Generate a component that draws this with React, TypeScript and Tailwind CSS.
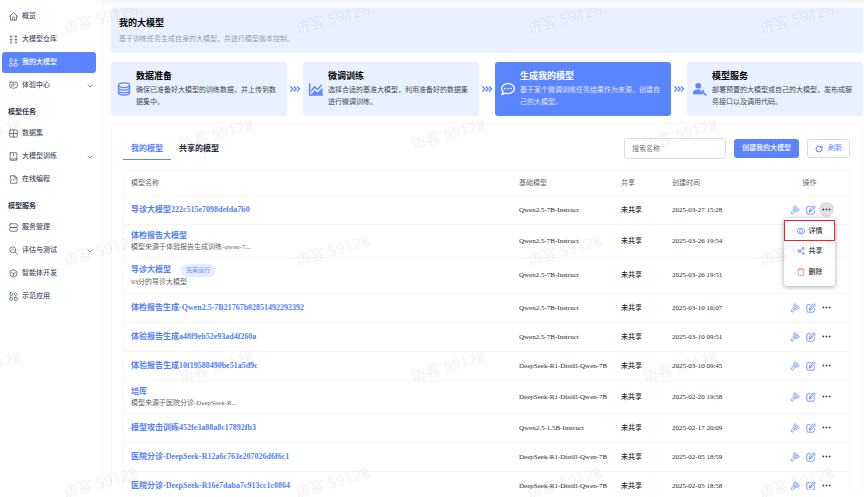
import React from "react";
import { clsx } from "clsx";
import { ChevronDown, RotateCw } from "lucide-react";
import { FaRegCommentDots } from "react-icons/fa";
import { AiOutlineDelete, AiOutlineEye, AiOutlineShareAlt } from "react-icons/ai";

type IconProps = { className?: string };

const LineIcon: React.FC<IconProps & { children: React.ReactNode }> = ({ className, children }) => (
  <svg
    viewBox="0 0 24 24"
    fill="none"
    stroke="currentColor"
    strokeWidth="2"
    strokeLinejoin="round"
    strokeLinecap="round"
    className={clsx("shrink-0", className)}
    aria-hidden="true"
  >
    {children}
  </svg>
);

const HomeIcon = (p: IconProps) => (
  <LineIcon {...p}>
    <path d="M1.5 11.5 12 2l10.5 9.5M4 10v11.500h16V10" />
    <path d="M9 21v-5a3 3 0 0 1 6 0v5" />
  </LineIcon>
);

const RepoIcon = (p: IconProps) => (
  <LineIcon {...p}>
    <path d="M3 3h5M3 12h5M3 21h5M16 3h5M16 12h5M16 21h5M5.500 3v5M5.500 13v5M18.500 3v5M18.500 13v5" />
  </LineIcon>
);

const ModelIcon = (p: IconProps) => (
  <LineIcon {...p}>
    <rect x="2" y="2" width="7" height="7" rx="2" />
    <rect x="2" y="14" width="7" height="8" rx="2" />
    <rect x="14" y="14" width="8" height="8" rx="2" />
    <path d="M18 2v8M14 6h8" />
  </LineIcon>
);

const ChatIcon = (p: IconProps) => (
  <LineIcon {...p}>
    <path d="M5 3h14a3 3 0 0 1 3 3v9a3 3 0 0 1-3 3h-4l-3 3-3-3H5a3 3 0 0 1-3-3V6a3 3 0 0 1 3-3z" />
    <path d="M7 8.500h10M7 13h6" />
  </LineIcon>
);

const GridIcon = (p: IconProps) => (
  <LineIcon {...p}>
    <rect x="2" y="2.500" width="20" height="19" rx="2" />
    <path d="M12 3v18M2 12h20" />
  </LineIcon>
);

const TrainIcon = (p: IconProps) => (
  <LineIcon {...p}>
    <rect x="3" y="2" width="18" height="20" rx="1" />
    <path d="M12 5v5M3 18.500h18" />
  </LineIcon>
);

const CodeFileIcon = (p: IconProps) => (
  <LineIcon {...p}>
    <path d="M4 9V2h11l6 6v3M15 2v6h6M4 17v5h17v-5" />
    <path d="M2 13h6M11 13h3M18 13h4" />
  </LineIcon>
);

const ServerIcon = (p: IconProps) => (
  <LineIcon {...p}>
    <rect x="2" y="2" width="20" height="10" rx="3" />
    <rect x="2" y="12" width="20" height="10" rx="3" />
  </LineIcon>
);

const EvaluateIcon = (p: IconProps) => (
  <LineIcon {...p}>
    <circle cx="10" cy="10" r="8" />
    <path d="m16 16 6 6M7 11l3-3 3 3" />
  </LineIcon>
);

const CubeIcon = (p: IconProps) => (
  <LineIcon {...p}>
    <path d="m12 2 9 5v10l-9 5-9-5V7z" />
    <path d="m7 9.500 5 2.500 5-2.500M12 12v6" />
  </LineIcon>
);

const DemoIcon = (p: IconProps) => (
  <LineIcon {...p}>
    <rect x="2" y="2" width="7" height="7" rx="2" />
    <rect x="2" y="14" width="7" height="8" rx="2" />
    <rect x="14" y="14" width="8" height="8" rx="2" />
    <path d="M18 1.500 22 6l-4 4-4-4z" />
  </LineIcon>
);

const DatabaseIcon = (p: IconProps) => (
  <svg
    viewBox="0 0 24 24"
    fill="none"
    stroke="currentColor"
    strokeWidth="2.200"
    className={p.className}
    aria-hidden="true"
  >
    <ellipse cx="12" cy="5.500" rx="9.500" ry="4" />
    <path d="M2.500 5.500v13c0 2.200 4.200 4 9.500 4s9.500-1.800 9.500-4v-13" />
    <path d="M2.500 10c0 2.200 4.200 4 9.500 4s9.500-1.800 9.500-4M2.500 14.500c0 2.200 4.200 4 9.500 4s9.500-1.800 9.500-4" />
  </svg>
);

const ChartIcon = (p: IconProps) => (
  <svg viewBox="0 0 24 24" fill="currentColor" className={p.className} aria-hidden="true">
    <path d="M0 2h2.500v19H24v2.500H0z" />
    <path d="M4 18.500V13l5.500-6.500 5 4.500L21 4l1.600 1.500-8 9.200-5-4.500L6 14.500z" />
    <path d="m4 21.500 5.700-7.500 5 4.500 8.300-8.500v11.500z" />
  </svg>
);

const UserToolIcon = (p: IconProps) => (
  <svg viewBox="0 0 24 24" fill="currentColor" className={p.className} aria-hidden="true">
    <circle cx="9" cy="6.500" r="4.800" />
    <path d="M0 21v-2.500C0 15 4 13 9 13c1.300 0 2.600.1 3.600.4-.4 2.300.7 4.300 2.900 5.100L18 21z" />
    <path d="M14 13.200a4 4 0 0 1 5.300 4.700l4.400 4.100-2 2-4.300-4.200a4 4 0 0 1-4.500-5.100l2.400 2.200 1.500-1.500z" />
  </svg>
);

const TripleArrow = (p: IconProps) => (
  <svg
    viewBox="0 0 20 12"
    fill="none"
    stroke="currentColor"
    strokeWidth="2.600"
    className={p.className}
    aria-hidden="true"
  >
    <path d="m1 1 5 5-5 5M7.500 1l5 5-5 5M14 1l5 5-5 5" />
  </svg>
);

const DeployIcon = (p: IconProps) => (
  <LineIcon {...p}>
    <path d="m13 2 9 9-3.500 3.500h-6l-3-3v-6z" />
    <path d="M14 7v3h3M9 11.500 2 18.500 5.500 22l7-7" />
  </LineIcon>
);

const EditIcon = (p: IconProps) => (
  <LineIcon {...p}>
    <path d="M10 4H5a3 3 0 0 0-3 3v12a3 3 0 0 0 3 3h12a3 3 0 0 0 3-3v-5" />
    <path d="m8 16 1-5L18.500 1.500l4 4L13 15zM15.500 4.500l4 4M8 16l6-6" />
  </LineIcon>
);

const DotsIcon = (p: IconProps) => (
  <svg viewBox="0 0 24 24" fill="currentColor" className={p.className} aria-hidden="true">
    <circle cx="3.500" cy="12" r="2.500" />
    <circle cx="12" cy="12" r="2.500" />
    <circle cx="20.500" cy="12" r="2.500" />
  </svg>
);

type NavEntry = {
  name: string;
  icon: React.FC<IconProps>;
  active?: boolean;
  expandable?: boolean;
};

const navGroups: { title?: string; items: NavEntry[] }[] = [
  {
    items: [
      { name: "概览", icon: HomeIcon },
      { name: "大模型仓库", icon: RepoIcon },
      { name: "我的大模型", icon: ModelIcon, active: true },
      { name: "体验中心", icon: ChatIcon, expandable: true },
    ],
  },
  {
    title: "模型任务",
    items: [
      { name: "数据集", icon: GridIcon },
      { name: "大模型训练", icon: TrainIcon, expandable: true },
      { name: "在线编程", icon: CodeFileIcon },
    ],
  },
  {
    title: "模型服务",
    items: [
      { name: "服务管理", icon: ServerIcon },
      { name: "评估与测试", icon: EvaluateIcon, expandable: true },
      { name: "智能体开发", icon: CubeIcon },
      { name: "示范应用", icon: DemoIcon },
    ],
  },
];

const steps = [
  {
    title: "数据准备",
    text: "确保已准备好大模型的训练数据，并上传到数据集中。",
    icon: DatabaseIcon,
  },
  {
    title: "微调训练",
    text: "选择合适的基准大模型，利用准备好的数据集进行微调训练。",
    icon: ChartIcon,
  },
  {
    title: "生成我的模型",
    text: "基于某个微调训练任务结果作为来源，创建自己的大模型。",
    icon: FaRegCommentDots,
    active: true,
  },
  {
    title: "模型服务",
    text: "部署预置的大模型或自己的大模型，发布成服务接口以及调用代码。",
    icon: UserToolIcon,
  },
];

type Model = {
  name: string;
  note?: string;
  tag?: string;
  base: string;
  created: string;
};

const models: Model[] = [
  { name: "导诊大模型222c515e7098defda7b0", base: "Qwen2.5-7B-Instruct", created: "2025-03-27 15:28" },
  {
    name: "体检报告大模型",
    note: "模型来源于体验报告生成训练-qwen-7...",
    base: "Qwen2.5-7B-Instruct",
    created: "2025-03-26 19:54",
  },
  {
    name: "导诊大模型",
    note: "93分的导诊大模型",
    tag: "完美运行",
    base: "Qwen2.5-7B-Instruct",
    created: "2025-03-26 19:51",
  },
  { name: "体检报告生成-Qwen2.5-7B21767b02851492292392", base: "Qwen2.5-7B-Instruct", created: "2025-03-10 16:07" },
  { name: "体验报告生成a48f9eb52e93ad4f260a", base: "Qwen2.5-7B-Instruct", created: "2025-03-10 09:51" },
  { name: "体验报告生成10f19588490be51a5d9c", base: "DeepSeek-R1-Distill-Qwen-7B", created: "2025-03-10 09:45" },
  {
    name: "培库",
    note: "模型来源于医院分诊-DeepSeek-R...",
    base: "DeepSeek-R1-Distill-Qwen-7B",
    created: "2025-02-20 19:58",
  },
  { name: "模型攻击训练452fe3a88a8c17892fb3", base: "Qwen2.5-1.5B-Instruct", created: "2025-02-17 20:09" },
  { name: "医院分诊-DeepSeek-R12a6c763e207026d6f6c1", base: "DeepSeek-R1-Distill-Qwen-7B", created: "2025-02-05 18:59" },
  { name: "医院分诊-DeepSeek-R16e7daba7c913cc1c0864", base: "DeepSeek-R1-Distill-Qwen-7B", created: "2025-02-05 18:58" },
];

const Sidebar: React.FC = () => (
  <aside className="w-[103px] shrink-0 border-r border-[#f5f6f8] pt-[6px] pl-[2px] pr-[6px]">
    <nav>
      {navGroups.map((group, i) => (
        <div key={i}>
          {group.title && (
            <h2 className="mt-[9px] mb-1 pl-[6px] text-[7px] leading-[14px] font-bold text-[#303b50]">
              {group.title}
            </h2>
          )}
          <ul className="flex flex-col gap-[2px]">
            {group.items.map(({ name, icon: Icon, active, expandable }) => (
              <li key={name}>
                <a
                  href="#"
                  className={clsx(
                    "flex h-[21px] items-center gap-1 rounded-[3px] pl-[7px] pr-[2px] text-[7px] font-medium",
                    active ? "bg-[#5b84ff] text-white" : "text-[#4a5568]"
                  )}
                >
                  <Icon className="size-[9px]" />
                  {name}
                  {expandable && <ChevronDown className="ml-auto size-[8px]" />}
                </a>
              </li>
            ))}
          </ul>
        </div>
      ))}
    </nav>
  </aside>
);

const Steps: React.FC = () => (
  <ol className="mt-[9px] flex">
    {steps.map(({ title, text, icon: Icon, active }, i) => (
      <React.Fragment key={title}>
        {i > 0 && (
          <li className="flex w-4 shrink-0 items-center justify-center" aria-hidden="true">
            <TripleArrow className="w-[10px] text-[#5b84ff]" />
          </li>
        )}
        <li
          className={clsx(
            "flex flex-1 items-center gap-[5px] rounded-[3px] py-2 pl-[6px] pr-[5px]",
            active ? "bg-[#5b84ff] text-white" : "bg-[#eaf0ff] text-[#5b84ff]"
          )}
        >
          <Icon className="size-[14px] shrink-0" />
          <div>
            <h3 className={clsx("text-[9px] leading-3 font-bold", !active && "text-black")}>{title}</h3>
            <p className={clsx("mt-[2px] text-[7px] leading-3", active ? "text-[#dfe7ff]" : "text-[#444a55]")}>
              {text}
            </p>
          </div>
        </li>
      </React.Fragment>
    ))}
  </ol>
);

const RowMenu: React.FC = () => (
  <div
    role="menu"
    className="absolute top-full right-0 z-10 -mr-px mt-px flex w-[51px] flex-col rounded-[3px] bg-white pt-[2px] pb-1 font-medium text-[#333] shadow-[0_1px_5px_rgba(0,0,0,0.35)]"
  >
    <button
      role="menuitem"
      className="flex h-[21px] items-center justify-center gap-[3px] border border-solid border-[#f5222d]"
    >
      <AiOutlineEye className="size-[10px] text-[#5b84ff]" />
      详情
    </button>
    <button role="menuitem" className="flex h-[20px] items-center justify-center gap-[3px]">
      <AiOutlineShareAlt className="size-[10px] text-[#5b84ff]" />
      共享
    </button>
    <button role="menuitem" className="flex h-[21px] items-center justify-center gap-[3px]">
      <AiOutlineDelete className="size-[10px] text-[#ff8a65]" />
      删除
    </button>
  </div>
);

const ModelTable: React.FC = () => (
  <div className="mt-[10px] rounded-t-[4px] border border-b-0 border-[#f5f6f8]">
    <table className="w-full table-fixed border-collapse text-left font-['Liberation_Serif','Noto_Sans_CJK_SC',serif] text-[7px] leading-[10px] text-[#2a2a2a]">
      <thead>
        <tr className="h-[24px] border-b border-[#f5f6f8] text-[#666]">
          <th className="pl-[7px] font-normal">模型名称</th>
          <th className="w-[102px] pl-[7px] font-normal">基础模型</th>
          <th className="w-[51px] pl-[7px] font-normal">共享</th>
          <th className="w-[104px] pl-[7px] font-normal">创建时间</th>
          <th className="w-[80px] pl-px text-center font-normal">操作</th>
        </tr>
      </thead>
      <tbody>
        {models.map((model, i) => (
          <tr
            key={model.name}
            className={clsx(
              "border-b border-[#f5f6f8]",
              model.tag ? "h-[36px]" : model.note ? "h-[33px]" : "h-[29px]"
            )}
          >
            <td className="pl-[7px]">
              <div className="flex items-center gap-[10px]">
                <a href="#" className="text-[8px] leading-[12px] font-bold text-[#5580f8]">
                  {model.name}
                </a>
                {model.tag && (
                  <span className="rounded-full bg-[#e6ecff] px-[5px] leading-[13px] text-[6px] text-[#6d90ff]">
                    {model.tag}
                  </span>
                )}
              </div>
              {model.note && <p className="text-[#666]">{model.note}</p>}
            </td>
            <td className="pl-[7px] whitespace-nowrap">{model.base}</td>
            <td className="pl-[7px] font-medium">未共享</td>
            <td className="pl-[7px]">{model.created}</td>
            <td className="pl-[2px]">
              <div className="flex items-center justify-center gap-[6px] text-[#5b84ff]">
                <button aria-label="部署">
                  <DeployIcon className="size-[10px]" />
                </button>
                <button aria-label="编辑">
                  <EditIcon className="size-[10px]" />
                </button>
                <div className="relative -mx-[3px]">
                  <button
                    aria-label="更多"
                    className={clsx(
                      "flex size-[15px] items-center justify-center rounded-full text-[#444]",
                      i === 0 && "bg-[#e0e0e0]"
                    )}
                  >
                    <DotsIcon className="size-[9px]" />
                  </button>
                  {i === 0 && <RowMenu />}
                </div>
              </div>
            </td>
          </tr>
        ))}
      </tbody>
    </table>
  </div>
);

const Watermark: React.FC = () => (
  <svg className="pointer-events-none absolute inset-0 z-20 size-full" aria-hidden="true">
    <defs>
      <pattern id="visitor" width="232" height="232" patternUnits="userSpaceOnUse">
        <g fill="#000" fillOpacity="0.05" fontSize="15" textAnchor="middle" dominantBaseline="central">
          <text transform="translate(100 18) rotate(-15)">访客 59128</text>
          <text transform="translate(216 134) rotate(-15)">访客 59128</text>
          <text transform="translate(-16 134) rotate(-15)">访客 59128</text>
        </g>
      </pattern>
    </defs>
    <rect width="100%" height="100%" fill="url(#visitor)" />
  </svg>
);

const App: React.FC = () => (
  <div className="relative h-screen overflow-hidden bg-white pb-[7px] font-['Noto_Sans','Noto_Sans_CJK_SC',sans-serif]">
    <div className="flex h-full overflow-hidden">
      <Sidebar />
      <main className="min-w-0 flex-1 bg-linear-to-b from-[#f3f4f6] to-white to-[6px] pt-2 pr-px pl-2">
        <header className="rounded-[3px] bg-[#eaf0ff] px-2 py-[9px]">
          <h1 className="text-[9px] leading-3 font-bold text-black">我的大模型</h1>
          <p className="mt-[5px] text-[7px] leading-[10px] text-[#9a9fab]">
            基于训练任务生成自身的大模型，并进行模型版本控制。
          </p>
        </header>
        <Steps />
        <section className="mt-[7px] rounded-[4px] border border-[#f5f6f8] pt-[13px] pr-[12px] pl-[11px]">
          <div className="flex h-[23px] items-center gap-2">
            <div role="tablist" className="mr-auto flex self-stretch text-[8px] font-bold">
              <button role="tab" aria-selected="true" className="border-b border-[#5b84ff] px-2 text-[#5b84ff]">
                我的模型
              </button>
              <button role="tab" aria-selected="false" className="border-b border-transparent px-2 text-[#1f2937]">
                共享的模型
              </button>
            </div>
            <input
              type="text"
              aria-label="搜索名称"
              placeholder="搜索名称"
              className="h-[21px] w-[102px] rounded-[3px] border border-[#dcdfe3] px-[7px] text-[7px] placeholder:text-[#777]"
            />
            <button className="h-[19px] rounded-[3px] bg-[#5b84ff] px-2 text-[7px] font-medium text-white">
              创建我的大模型
            </button>
            <button className="flex h-[19px] items-center gap-[5px] rounded-[3px] border border-[#cdd9ff] px-[7px] text-[7px] text-[#5b84ff]">
              <RotateCw className="size-[8px]" strokeWidth={3} />
              刷新
            </button>
          </div>
          <ModelTable />
        </section>
      </main>
    </div>
    <Watermark />
  </div>
);

export default App;
